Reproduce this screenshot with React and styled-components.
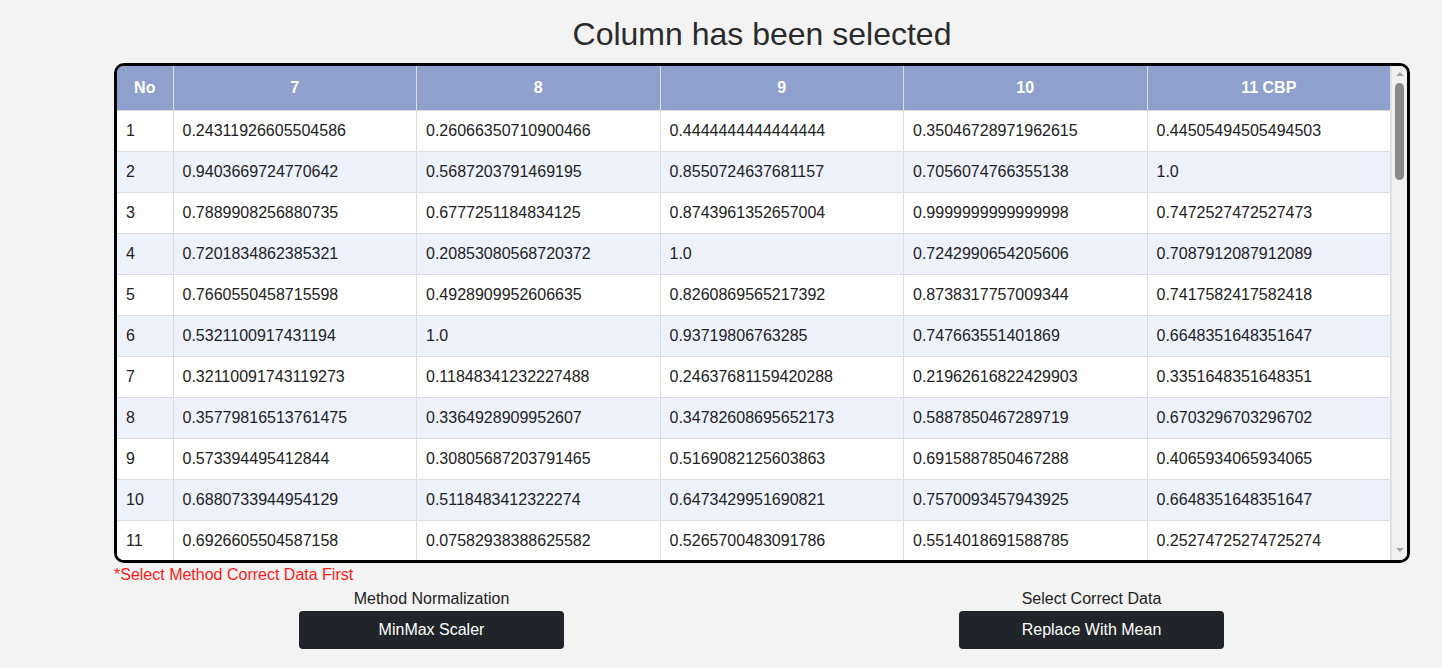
import React from 'react';
import styled, { createGlobalStyle } from 'styled-components';

const GlobalStyle = createGlobalStyle`
  body {
    margin: 0;
    background: #f3f3f3;
    font-family: 'Liberation Sans', Arial, sans-serif;
    color: #212529;
  }
`;

const Page = styled.div`
  margin: 0 32px 0 114px;
  padding-top: 14px;
`;

const Title = styled.h1`
  margin: 0 0 9px;
  font-size: 32px;
  font-weight: 400;
  line-height: 40px;
  text-align: center;
  color: #2b2b2b;
`;

const TableFrame = styled.div`
  display: flex;
  height: 494px;
  border: 3px solid #000;
  border-radius: 10px;
  overflow: hidden;
  background: #fff;
`;

const Scroller = styled.div`
  flex: 1;
  min-width: 0;
  overflow: hidden;
`;

// drawn scrollbar rail (the browser hides native scrollbars)
const Rail = styled.div`
  flex: 0 0 15px;
  display: flex;
  flex-direction: column;
  align-items: center;
  background: #f1f1f1;
  border-left: 1px solid #e4e4e4;
`;

const Arrow = styled.div`
  width: 0;
  height: 0;
  margin: ${(p) => (p.$down ? 'auto 0 8px' : '6px 0 0')};
  border-left: 4px solid transparent;
  border-right: 4px solid transparent;
  ${(p) =>
    p.$down ? 'border-top: 4px solid #a3a3a3;' : 'border-bottom: 4px solid #a3a3a3;'}
`;

const Thumb = styled.div`
  width: 9px;
  height: 97px;
  margin-top: 7px;
  border-radius: 5px;
  background: #8a8a8a;
`;

const Table = styled.table`
  width: 100%;
  border-collapse: collapse;
  table-layout: fixed;
  font-size: 16px;
`;

const Th = styled.th`
  box-sizing: border-box;
  height: 44px;
  padding: 0 8px;
  background: #8ea0cb;
  color: #fff;
  font-weight: 700;
  text-align: center;
  border-right: 1px solid #dcdcdc;
  width: ${(p) => (p.$narrow ? '56px' : 'auto')};
`;

const Row = styled.tr`
  background: ${(p) => (p.$alt ? '#eef2fd' : '#fff')};
`;

const Td = styled.td`
  height: 40px;
  padding: 0 9px;
  line-height: 24px;
  border-right: 1px solid #dcdcdc;
  border-top: 1px solid #dcdcdc;
  color: #222;
  white-space: nowrap;
  overflow: hidden;
`;

const Warning = styled.div`
  margin-top: 3px;
  color: #ff1a1a;
  font-size: 16px;
  line-height: 18px;
`;

const Controls = styled.div`
  display: flex;
  justify-content: center;
  gap: 395px;
  margin-top: 4px;
  margin-left: -1px;
`;

const Control = styled.div`
  display: flex;
  flex-direction: column;
  align-items: center;
  width: 265px;
`;

const Label = styled.div`
  font-size: 16px;
  line-height: 22px;
  color: #222;
  margin-bottom: 1px;
`;

const DarkButton = styled.button`
  width: 265px;
  height: 38px;
  border: none;
  border-radius: 4px;
  background: #212529;
  color: #fff;
  font-family: 'Liberation Sans', Arial, sans-serif;
  font-size: 16px;
`;

const columns = ['7', '8', '9', '10', '11 CBP'];

const known = [
  ['0.24311926605504586', '0.26066350710900466', '0.4444444444444444', '0.35046728971962615', '0.44505494505494503'],
  ['0.9403669724770642', '0.5687203791469195', '0.8550724637681157', '0.7056074766355138', '1.0'],
  ['0.7889908256880735', '0.6777251184834125', '0.8743961352657004', '0.9999999999999998', '0.7472527472527473'],
  ['0.7201834862385321', '0.20853080568720372', '1.0', '0.7242990654205606', '0.7087912087912089'],
  ['0.7660550458715598', '0.4928909952606635', '0.8260869565217392', '0.8738317757009344', '0.7417582417582418'],
  ['0.5321100917431194', '1.0', '0.93719806763285', '0.747663551401869', '0.6648351648351647'],
  ['0.32110091743119273', '0.11848341232227488', '0.24637681159420288', '0.21962616822429903', '0.3351648351648351'],
  ['0.35779816513761475', '0.3364928909952607', '0.34782608695652173', '0.5887850467289719', '0.6703296703296702'],
  ['0.573394495412844', '0.30805687203791465', '0.5169082125603863', '0.6915887850467288', '0.4065934065934065'],
  ['0.6880733944954129', '0.5118483412322274', '0.6473429951690821', '0.7570093457943925', '0.6648351648351647'],
  ['0.6926605504587158', '0.07582938388625582', '0.5265700483091786', '0.5514018691588785', '0.25274725274725274'],
];

// rest of the table sits below the fold (scrolled out of view)
const denoms = [218, 211, 207, 214, 182];
let seed = 7;
const rand = () => {
  seed = (seed * 9301 + 49297) % 233280;
  return seed / 233280;
};
const rows = [...known];
for (let i = known.length; i < 59; i++) {
  rows.push(denoms.map((d) => String(Math.round(rand() * d) / d)));
}

export default function App() {
  return (
    <>
      <GlobalStyle />
      <Page>
        <Title>Column has been selected</Title>
        <TableFrame>
          <Scroller>
            <Table>
              <thead>
                <tr>
                  <Th $narrow>No</Th>
                  {columns.map((c) => (
                    <Th key={c}>{c}</Th>
                  ))}
                </tr>
              </thead>
              <tbody>
                {rows.map((r, i) => (
                  <Row key={i} $alt={i % 2 === 1}>
                    <Td>{i + 1}</Td>
                    {r.map((v, j) => (
                      <Td key={j}>{v}</Td>
                    ))}
                  </Row>
                ))}
              </tbody>
            </Table>
          </Scroller>
          <Rail>
            <Arrow />
            <Thumb />
            <Arrow $down />
          </Rail>
        </TableFrame>
        <Warning>*Select Method Correct Data First</Warning>
        <Controls>
          <Control>
            <Label>Method Normalization</Label>
            <DarkButton>MinMax Scaler</DarkButton>
          </Control>
          <Control>
            <Label>Select Correct Data</Label>
            <DarkButton>Replace With Mean</DarkButton>
          </Control>
        </Controls>
      </Page>
    </>
  );
}
